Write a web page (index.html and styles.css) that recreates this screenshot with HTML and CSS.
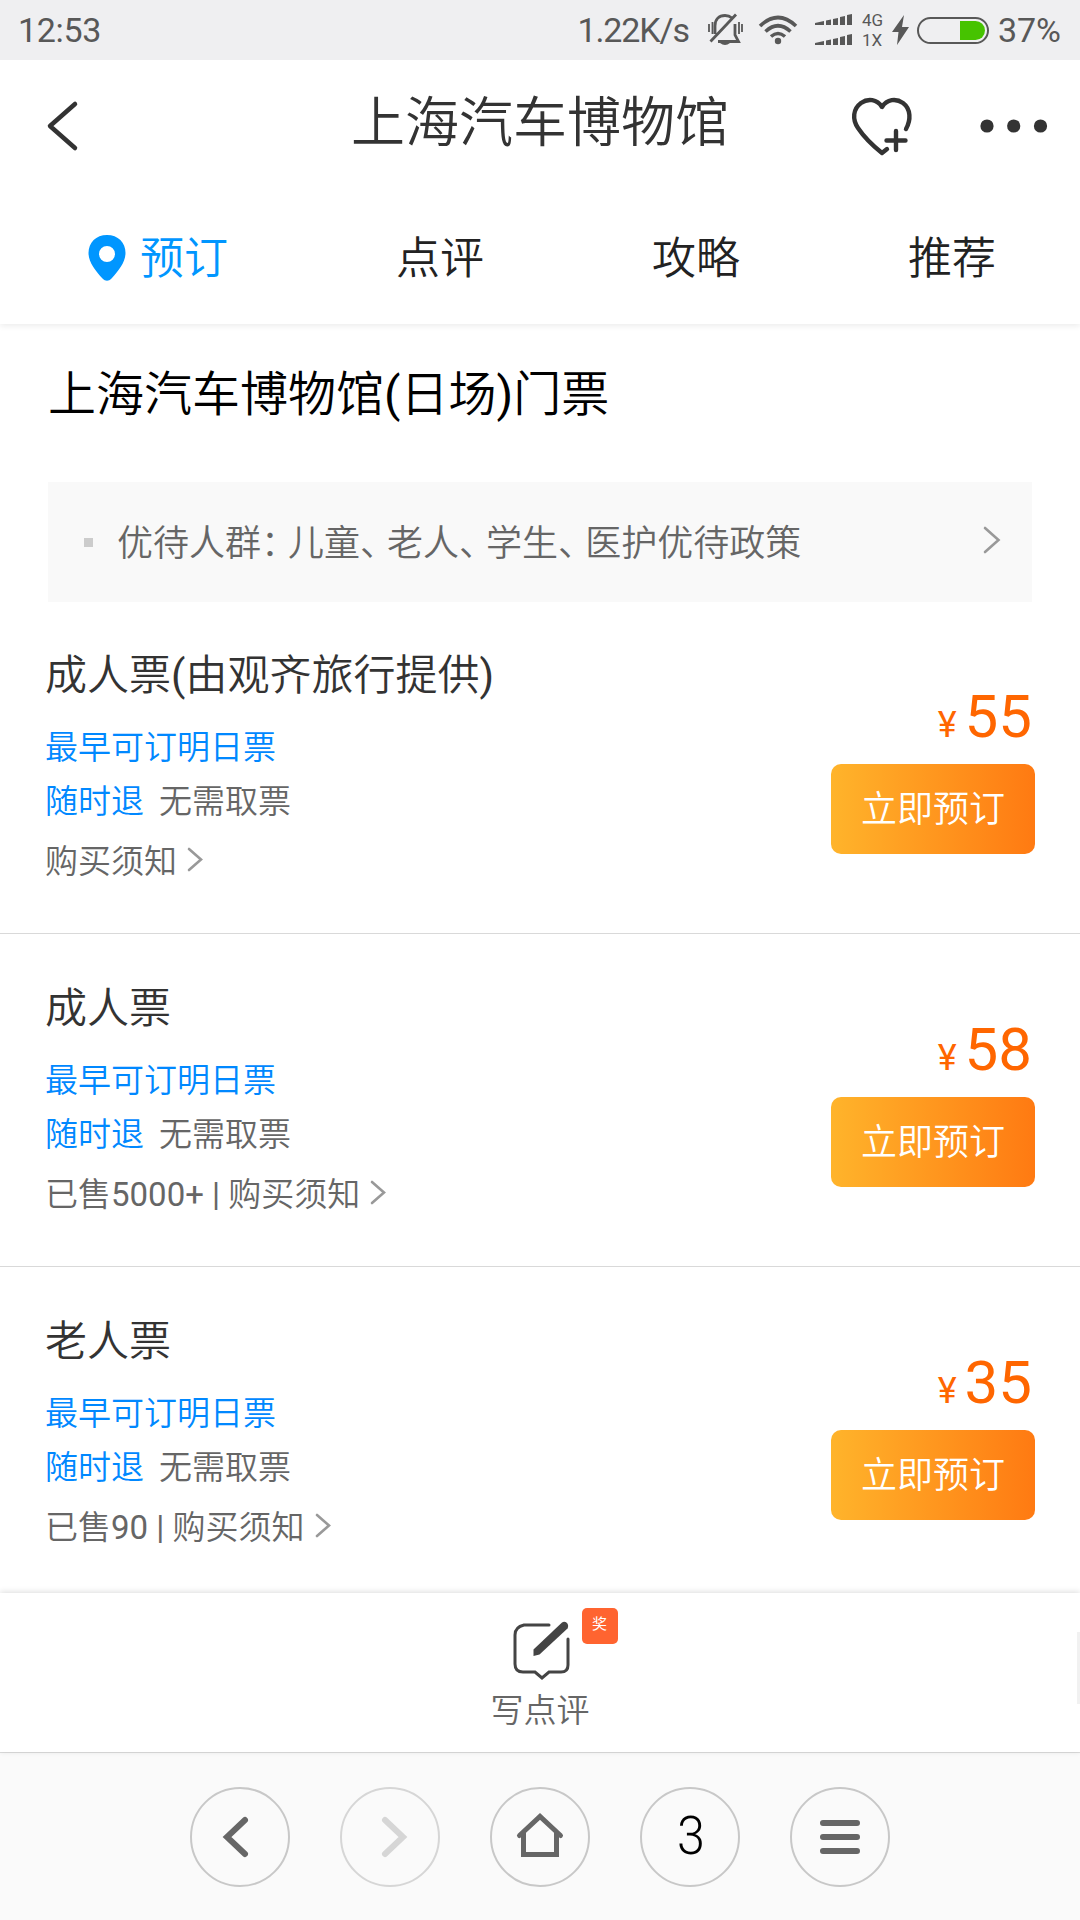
FILE: index.html
```html
<!DOCTYPE html>
<html lang="zh-CN">
<head>
<meta charset="utf-8">
<title>上海汽车博物馆</title>
<link rel="stylesheet" href="styles.css">
</head>
<body>
<div class="screen">
  <div class="status">
    <span class="clock">12:53</span>
    <div class="indicators">
      <span class="speed">1.22K/s</span>
      <svg class="mute" width="36" height="34" viewBox="0 0 36 34" fill="none" stroke="#585858" stroke-width="2.800">
        <path d="M3.500 28.500 29 1.500M8 21V13C8 6 12 2.500 18 2.500c3 0 5 .8 7 2.500M28 11v11l3.500 6.500H11"/>
        <path d="M2 11v8M5.500 9v12M32 9v12M35 11v8" stroke-width="1.8"/>
        <path d="M13 30h10q-5 4-10 0z" fill="#585858" stroke="none"/>
      </svg>
      <svg class="wifi" width="40" height="30" viewBox="0 0 40 30" fill="none" stroke="#585858" stroke-width="3.600">
        <path d="M2 11Q20-6 38 11M7.500 16.500Q20 5 32.500 16.500M13 21.500q7-6 14 0"/><circle cx="20" cy="26" r="3.200" fill="#585858" stroke="none"/>
      </svg>
      <svg class="signal" width="38" height="33" viewBox="0 0 38 33" fill="#585858">
        <path d="M0 11V9l9-2v4zM11 11V6.500l5-1V11zM18 11V5l5-1v7zM25 11V3l5-1v9zM32 11V1l5-1v11z"/>
        <path transform="translate(0 20)" d="M0 11V9l9-2v4zM11 11V6.500l5-1V11zM18 11V5l5-1v7zM25 11V3l5-1v9zM32 11V1l5-1v11z"/>
      </svg>
      <span class="net"><span>4G</span><span>1X</span></span>
      <svg class="bolt" width="17" height="30" viewBox="0 0 17 30" fill="#585858"><path d="M12 0 0 17h6.500L5 30 17 12h-7z"/></svg>
      <span class="battery"><i></i></span>
      <span class="percent">37%</span>
    </div>
  </div>

  <header class="header">
    <svg class="back" width="36" height="54" viewBox="0 0 36 54" fill="none" stroke="#333" stroke-width="4.500" stroke-linecap="round" stroke-linejoin="round"><path d="M29 5 4 27 29 49"/></svg>
    <h1>上海汽车博物馆</h1>
    <div class="actions">
      <svg class="heart" width="64" height="60" viewBox="0 0 64 60" fill="none" stroke="#333" stroke-width="4.400" stroke-linecap="round" stroke-linejoin="round">
        <path d="M56 33C61 24 61 13 53 7c-7-5-16-4-21 4C27 3 18 2 11 7 3 13 2 23 8 32c6 9 14 17 24 25l5-4M46 35v19M36.500 44.500h19"/>
      </svg>
      <svg width="68" height="16" viewBox="0 0 68 16" fill="#333"><circle cx="7" cy="8" r="6.600"/><circle cx="33.700" cy="8" r="6.600"/><circle cx="60.500" cy="8" r="6.600"/></svg>
    </div>
  </header>

  <nav class="tabs">
    <a class="tab active"><svg width="38" height="46" viewBox="0 0 38 46"><path fill="#0096ff" fill-rule="evenodd" d="M19 0C8 0 .5 7.500.5 18c0 9 7 18 14 25.500 3 3 6 3 9 0C30.500 36 37.500 27 37.500 18 37.500 7.500 30 0 19 0zm0 11a8 8 0 1 1 0 16 8 8 0 0 1 0-16z"/></svg>预订</a>
    <a class="tab">点评</a>
    <a class="tab">攻略</a>
    <a class="tab">推荐</a>
  </nav>

  <main class="content">
    <h2>上海汽车博物馆<b>(</b>日场<b>)</b>门票</h2>
    <div class="notice">
      <i class="bullet"></i>
      <span class="notice-text">优待人群<em>：</em>儿童<em>、</em>老人<em>、</em>学生<em>、</em>医护优待政策</span>
      <svg width="18" height="28" viewBox="0 0 18 28" class="chev"><path d="M2 2 15.500 14 2 26"/></svg>
    </div>

    <section class="ticket">
      <div class="info">
        <h3>成人票<b>(</b>由观齐旅行提供<b>)</b></h3>
        <p class="early">最早可订明日票</p>
        <p class="tags"><span>随时退</span>无需取票</p>
        <p class="more"><span>购买须知</span><svg width="16" height="26" viewBox="0 0 16 26" class="chev"><path d="M2 3 14 13.500 2 24"/></svg></p>
      </div>
      <div class="buy">
        <div class="price"><small>¥</small>55</div>
        <button>立即预订</button>
      </div>
    </section>

    <section class="ticket">
      <div class="info">
        <h3>成人票</h3>
        <p class="early">最早可订明日票</p>
        <p class="tags"><span>随时退</span>无需取票</p>
        <p class="more"><span>已售<b>5000+ | </b>购买须知</span><svg width="16" height="26" viewBox="0 0 16 26" class="chev"><path d="M2 3 14 13.500 2 24"/></svg></p>
      </div>
      <div class="buy">
        <div class="price"><small>¥</small>58</div>
        <button>立即预订</button>
      </div>
    </section>

    <section class="ticket last">
      <div class="info">
        <h3>老人票</h3>
        <p class="early">最早可订明日票</p>
        <p class="tags"><span>随时退</span>无需取票</p>
        <p class="more"><span>已售<b>90 | </b>购买须知</span><svg width="16" height="26" viewBox="0 0 16 26" class="chev"><path d="M2 3 14 13.500 2 24"/></svg></p>
      </div>
      <div class="buy">
        <div class="price"><small>¥</small>35</div>
        <button>立即预订</button>
      </div>
    </section>
  </main>

  <footer class="review">
    <div class="review-btn">
      <svg width="58" height="60" viewBox="0 0 58 60" fill="none" stroke="#444" stroke-width="3" stroke-linecap="round">
        <path d="M36 3H11Q2 5 2 13v29q0 8 8 8h12l7 6 7-6h12q7 0 7-7V17"/>
        <path d="M20.500 34v-6.500L49 .5q2.500-1.500 5 .500 2 2.500.500 5.500L26.500 32.500z" fill="#444" stroke="none"/>
      </svg>
      <span class="badge">奖</span>
      <span>写点评</span>
    </div>
    <i class="scroll"></i>
  </footer>

  <nav class="browser">
    <a><svg width="100" height="100" viewBox="0 0 100 100"><path d="M55 33 37 50l18 17"/></svg></a>
    <a class="off"><svg width="100" height="100" viewBox="0 0 100 100"><path d="m45 33 18 17-18 17"/></svg></a>
    <a><svg width="100" height="100" viewBox="0 0 100 100" class="home"><path d="M29.500 48.500 50 29.500l20.500 19M33.500 46v21.500h33V46"/></svg></a>
    <a><span>3</span></a>
    <a><svg width="100" height="100" viewBox="0 0 100 100"><path d="M33 36h34M33 50h34M33 64h34"/></svg></a>
  </nav>
</div>
</body>
</html>
```
FILE: styles.css
```css
* { box-sizing: border-box; margin: 0; padding: 0; }
body {
  width: 1080px;
  height: 1920px;
  overflow: hidden;
  background: #fff;
  color: #333;
  font-family: Roboto, "Noto Sans CJK SC", sans-serif;
  font-weight: 350;
}
svg { display: block; flex: none; }
h1, h2, h3 { font-weight: 350; }
i, em { font-style: normal; }
b { font-weight: 400; }
.screen { display: flex; flex-direction: column; width: 1080px; height: 1920px; }

.status {
  display: flex;
  flex: none;
  justify-content: space-between;
  align-items: center;
  height: 60px;
  padding: 0 19px 0 18px;
  background: #efeff1;
  color: #585858;
  font-size: 34px;
  font-weight: 400;
}
.clock { letter-spacing: -.3px; }
.indicators { display: flex; align-items: center; }
.speed { margin-right: 18px; letter-spacing: -1.1px; }
.mute { margin-right: 15px; }
.wifi { margin-right: 17px; }
.signal { margin-right: 9px; }
.net { display: flex; flex-direction: column; width: 30px; font-size: 17px; line-height: 20px; }
.bolt { margin-right: 8px; }
.battery {
  display: flex;
  justify-content: flex-end;
  width: 72px;
  height: 27px;
  margin-right: 9px;
  padding: 2px;
  border: 2px solid #585858;
  border-radius: 14px;
}
.battery i { width: 25px; border-radius: 0 10px 10px 0; background: #46c300; }

.header {
  position: relative;
  z-index: 1;
  display: grid;
  flex: none;
  grid-template-columns: 260px 1fr 262px;
  align-items: center;
  height: 132px;
  padding: 0 32px 0 46px;
  background: #fff;
}
h1 { margin-left: -12px; padding-bottom: 4px; text-align: center; font-size: 54px; line-height: 80px; }
.actions { display: flex; align-items: center; justify-content: flex-end; gap: 66px; }

.tabs {
  display: grid;
  flex: none;
  grid-template-columns: repeat(4, 256px);
  height: 132px;
  padding: 34px 0 0 56px;
  box-shadow: 0 2px 6px rgba(0, 0, 0, .08);
}
.tab { display: flex; justify-content: center; gap: 14px; height: 68px; color: #222; font-size: 44px; line-height: 66px; }
.tab svg { margin-top: 9px; }
.active { justify-content: flex-start; padding-left: 32px; color: #0096ff; }

.content { flex: none; height: 1269px; overflow: hidden; }
h2 { padding: 34px 48px 0; height: 158px; color: #000; font-size: 48px; line-height: 74px; }
.notice {
  display: flex;
  align-items: center;
  height: 120px;
  margin: 0 48px -1px;
  padding: 0 31px 5px 36px;
  background: #f9f9f9;
  color: #666;
  font-size: 36px;
}
.bullet { width: 9px; height: 9px; margin-right: 24px; margin-top: 6px; background: #ccc; }
.notice-text { flex: 1; }
.notice-text em { letter-spacing: -9px; }
.chev { fill: none; stroke: #999; stroke-width: 2.600; stroke-linecap: round; }

.ticket {
  display: flex;
  justify-content: space-between;
  height: 333px;
  padding: 0 45px;
  border-bottom: 1px solid #d9d9d9;
}
.last { border: 0; }
.info { padding-top: 46px; color: #666; font-size: 33px; }
h3 { height: 74px; color: #333; font-size: 42px; line-height: 58px; }
.early { height: 54px; line-height: 54px; color: #0088ff; }
.tags { height: 54px; line-height: 54px; }
.tags span { margin-right: 15px; color: #0088ff; }
.more { display: flex; align-items: center; gap: 10px; height: 60px; }
.buy { display: flex; flex-direction: column; align-items: flex-end; padding-top: 81px; }
.price { height: 82px; padding-right: 3px; color: #ff6600; font-size: 60px; font-weight: 400; line-height: 70px; }
.price small { margin-right: 8px; font-size: 36px; }
button {
  width: 204px;
  height: 90px;
  padding-bottom: 7px;
  border: 0;
  border-radius: 10px;
  background: linear-gradient(90deg, #ffb42b, #ff7a12);
  color: #fff;
  font: inherit;
  font-size: 36px;
}

.review {
  position: relative;
  z-index: 1;
  display: flex;
  flex: none;
  justify-content: center;
  height: 159px;
  padding-top: 29px;
  background: #fff;
  box-shadow: 0 -1px 6px rgba(0, 0, 0, .14);
}
.review-btn { position: relative; display: flex; flex-direction: column; align-items: center; color: #666; font-size: 33px; line-height: 58px; }
.review-btn svg { margin-left: 3px; overflow: visible; }
.badge {
  position: absolute;
  top: -14px;
  left: 91px;
  width: 36px;
  height: 36px;
  border-radius: 5px;
  background: #ff6430;
  color: #fff;
  font-size: 15px;
  font-weight: 400;
  line-height: 33px;
  text-align: center;
}
.scroll { position: absolute; top: 39px; right: 0; width: 3px; height: 72px; background: #f1f1f1; }

.browser {
  display: flex;
  flex: none;
  justify-content: center;
  gap: 50px;
  height: 168px;
  padding-top: 34px;
  border-top: 1px solid #ddd;
  background: #fafafa;
}
.browser a { display: flex; justify-content: center; align-items: center; width: 100px; height: 100px; border: 2px solid #c8c8c8; border-radius: 50%; }
.browser svg { fill: none; stroke: #666; stroke-width: 6; stroke-linecap: round; }
.browser .home { stroke-width: 5; }
.browser .off { border-color: #d6d6d6; }
.browser .off svg { stroke: #d6d6d6; }
.browser span { padding: 0 0 3px 2px; color: #000; font-size: 54px; transform: scaleX(.93); }
```
